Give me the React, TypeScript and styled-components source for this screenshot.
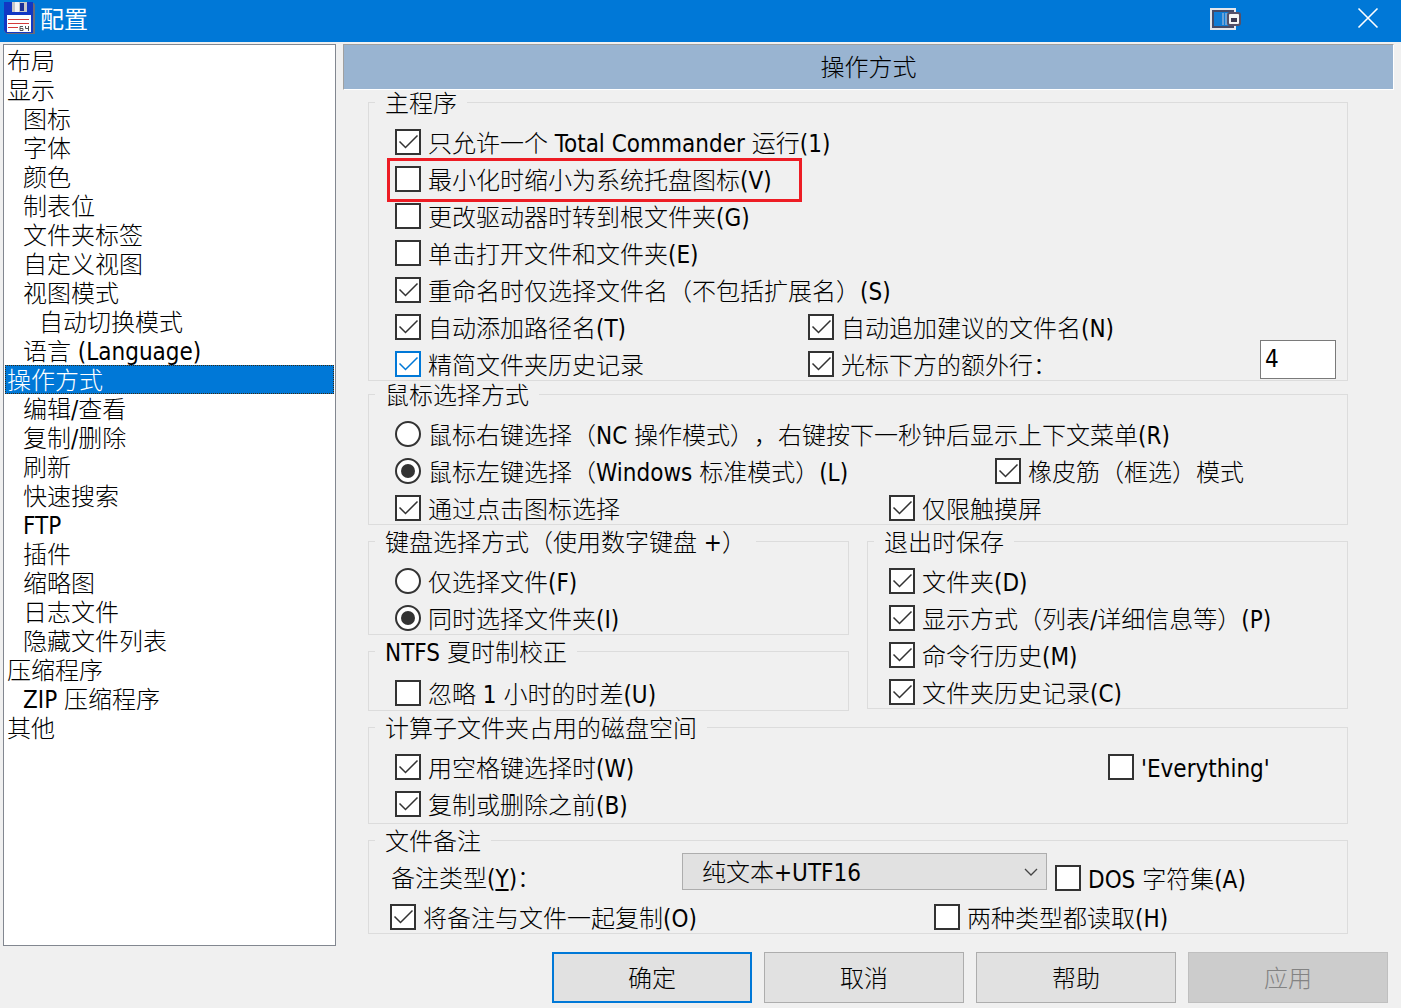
import React, { useState } from "react";
import styled, { createGlobalStyle, css } from "styled-components";

const GlobalStyle = createGlobalStyle`
  *, *::before, *::after { box-sizing: border-box; }
  html, body, #root { height: 100%; }
  body {
    margin: 0;
    background: #f0f0f0;
    color: #000;
    font-family: "DejaVu Sans Condensed", "Noto Sans CJK SC Light", "Noto Sans CJK SC", sans-serif;
    font-size: 24px;
    font-weight: 400;
    line-height: 30px;
    text-spacing-trim: space-all;
  }
  button, input, select { font: inherit; color: inherit; border-radius: 0; }
`;

const Dialog = styled.div`
  display: flex;
  flex-direction: column;
  min-height: 100%;
`;

const TitleBar = styled.header`
  display: flex;
  align-items: center;
  gap: 5px;
  height: 42px;
  padding: 0 20px 6px 3px;
  background: #0078d7;
  color: #fff;
`;

const Title = styled.h1`
  flex: 1;
  margin: 0;
  font-family: "Noto Sans CJK SC", sans-serif;
  font-size: 24px;
  font-weight: 400;
  line-height: 32px;
`;

const TitleButton = styled.button<{ $end?: boolean }>`
  display: flex;
  padding: 0;
  border: 0;
  background: none;
  margin-left: ${(p) => (p.$end ? "108px" : "0")};
`;

const Columns = styled.div`
  display: flex;
  flex: 1;
  gap: 7px;
  padding: 2px 7px 0 3px;
`;

const PageList = styled.nav`
  flex: 0 0 333px;
  align-self: flex-start;
  min-height: 902px;
  padding: 1px;
  border: 1px solid #828790;
  background: #fff;
`;

const PageItem = styled.button<{ $level: number; $active: boolean }>`
  display: block;
  width: 100%;
  height: 29px;
  padding: 4px 0 0 ${(p) => 2 + p.$level * 16}px;
  border: 0;
  background: none;
  line-height: 25px;
  text-align: left;
  white-space: nowrap;
  ${(p) =>
    p.$active &&
    css`
      background: #0078d7;
      color: #fff;
      outline: 1px dotted #3a2a10;
      outline-offset: -1px;
    `}
`;

const Main = styled.main`
  display: flex;
  flex: 1;
  flex-direction: column;
  min-width: 0;
`;

const PageHeading = styled.h2`
  height: 46px;
  margin: 0;
  padding-top: 2px;
  border: 1px solid;
  border-color: #a0a0a0 #fff #fff #a0a0a0;
  background: #99b4d1;
  font-size: 24px;
  font-weight: inherit;
  line-height: 42px;
  text-align: center;
`;

const Groups = styled.form`
  display: flex;
  flex-direction: column;
  gap: 4px;
  padding: 0 46px 0 25px;
`;

const Stack = styled.div<{ $gap: number }>`
  display: flex;
  flex-direction: column;
  gap: ${(p) => p.$gap}px;
`;

const Halves = styled.div`
  display: grid;
  grid-template-columns: 1fr 1fr;
  align-items: start;
  gap: 18px;
`;

const GroupBox = styled.fieldset<{ $top: number; $bottom: number; $left: number }>`
  display: flex;
  flex-direction: column;
  gap: 7px;
  min-width: 0;
  margin: 0;
  padding: ${(p) => `${p.$top}px 11px ${p.$bottom}px ${p.$left}px`};
  border: 1px solid #dcdcdc;
`;

const Legend = styled.legend<{ $shift: number }>`
  margin-left: ${(p) => -p.$shift}px;
  padding: 4px 10px 0;
  line-height: 20px;
  white-space: nowrap;
`;

const Row = styled.div<{ $lead?: number; $height?: number }>`
  display: grid;
  grid-template-columns: ${(p) => (p.$lead ? `${p.$lead}px auto 1fr` : "auto 1fr")};
  align-items: center;
  height: ${(p) => p.$height ?? 30}px;
`;

const OptionLabel = styled.label<{ $marked?: boolean }>`
  display: flex;
  align-items: center;
  gap: 7px;
  white-space: nowrap;
  ${(p) =>
    p.$marked &&
    css`
      position: relative;
      &::after {
        content: "";
        position: absolute;
        left: -8px;
        top: -6px;
        width: 415px;
        height: 44px;
        border: 3px solid #ed1c24;
        pointer-events: none;
      }
    `}
`;

const OptionText = styled.span`
  padding-top: 4px;
  line-height: 26px;
`;

const Mark = styled.span<{ $hot?: boolean }>`
  display: grid;
  flex: none;
  width: 26px;
  height: 26px;
  color: ${(p) => (p.$hot ? "#0078d7" : "#333")};
  & > * { grid-area: 1 / 1; }
  & > svg { visibility: hidden; pointer-events: none; }
  & > input:checked + svg { visibility: visible; }
`;

const MarkInput = styled.input`
  appearance: none;
  width: 26px;
  height: 26px;
  margin: 0;
  border: 2px solid currentColor;
  border-radius: ${(p) => (p.type === "radio" ? "50%" : "0")};
  background: #fff;
`;

const LinesInput = styled.input`
  justify-self: end;
  align-self: end;
  width: 76px;
  height: 39px;
  margin-top: -9px;
  padding: 0 4px 2px;
  border: 1px solid #7a7a7a;
  background: #fff;
`;

const TypeLabel = styled.label`
  padding: 2px 0 0 1px;
  white-space: nowrap;
`;

const SelectBox = styled.span`
  display: grid;
  align-self: start;
  align-items: center;
  width: 365px;
  margin-right: 8px;
  & > * { grid-area: 1 / 1; }
  & > svg { justify-self: end; margin-right: 8px; pointer-events: none; }
`;

const TypeSelect = styled.select`
  appearance: none;
  width: 100%;
  height: 37px;
  padding: 2px 30px 0 19px;
  border: 1px solid #adadad;
  background: #e1e1e1;
`;

const Buttons = styled.footer`
  display: flex;
  justify-content: flex-end;
  gap: 12px;
  margin-top: 18px;
  padding-right: 6px;
`;

const PushButton = styled.button<{ $primary?: boolean }>`
  width: 200px;
  height: 51px;
  padding: 2px 0 0;
  border: ${(p) => (p.$primary ? "2px solid #0078d7" : "1px solid #adadad")};
  background: #e1e1e1;
  &:disabled {
    border-color: #bfbfbf;
    background: #cccccc;
    color: #838383;
  }
`;

const DiskIcon = () => (
  <svg width="32" height="32" viewBox="0 0 32 32" aria-hidden="true">
    <path d="M2 1h29l1 2v29H4l-3-3z" fill="#6b6b78" />
    <path d="M1 0h29v31H3l-2-3z" fill="#1238c4" />
    <path d="M9 0h15v10H9z" fill="#c8c8c8" />
    <path d="M12 0h4v10h-4z" fill="#f4f4f4" />
    <path d="M17 1h4v8h-4z" fill="#1a2f96" />
    <path d="M4 13h24v17H4z" fill="#fff" />
    <path d="M5 17.500h21M5 21.500h21M5 25.500h10" stroke="#d23a3a" />
    <path d="M20 24.500h-3v4h3v-2h-3M22.500 24v2.500h3M25.500 24v5" stroke="#555" fill="none" />
  </svg>
);

const DockIcon = () => (
  <svg width="34" height="28" viewBox="0 0 34 28" aria-hidden="true">
    <path d="M3 5h24v20H3z" fill="#0078d7" stroke="#e4e6ec" strokeWidth="2" />
    <path d="M5 7h20v16H5z" fill="#0f7cd6" stroke="#444a68" strokeWidth="2" />
    <path d="M14 9h2v12h-2zM17 9h3v12h-3z" fill="#6aa2d8" />
    <rect x="20" y="9" width="12" height="12" rx="2" fill="#f4f4f4" stroke="#555068" strokeWidth="2" />
    <path d="M23 14h6v4h-6z" fill="#3a3850" />
  </svg>
);

const CloseIcon = () => (
  <svg width="26" height="26" viewBox="0 0 26 26" aria-hidden="true">
    <path d="M3.500 3.500l19 19M22.500 3.500l-19 19" stroke="#fff" strokeWidth="1.600" />
  </svg>
);

type OptionProps = {
  text: string;
  type?: "checkbox" | "radio";
  name?: string;
  on?: boolean;
  hot?: boolean;
  marked?: boolean;
};

const Option = ({ text, type = "checkbox", name, on, hot, marked }: OptionProps) => (
  <OptionLabel $marked={marked}>
    <Mark $hot={hot}>
      <MarkInput type={type} name={name} defaultChecked={on} />
      <svg width="26" height="26" viewBox="0 0 26 26" aria-hidden="true">
        {type === "radio" ? (
          <circle cx="13" cy="13" r="7" fill="currentColor" />
        ) : (
          <path d="M4.500 12.500l6 6L22.500 6.500" fill="none" stroke="currentColor" strokeWidth="1.500" />
        )}
      </svg>
    </Mark>
    <OptionText>{text}</OptionText>
  </OptionLabel>
);

type GroupProps = {
  title: string;
  top?: number;
  bottom?: number;
  left?: number;
  children: React.ReactNode;
};

const Group = ({ title, top = 13, bottom = 1, left = 26, children }: GroupProps) => (
  <GroupBox $top={top} $bottom={bottom} $left={left}>
    <Legend $shift={left - 6}>{title}</Legend>
    {children}
  </GroupBox>
);

const pages: [string, number][] = [
  ["布局", 0],
  ["显示", 0],
  ["图标", 1],
  ["字体", 1],
  ["颜色", 1],
  ["制表位", 1],
  ["文件夹标签", 1],
  ["自定义视图", 1],
  ["视图模式", 1],
  ["自动切换模式", 2],
  ["语言 (Language)", 1],
  ["操作方式", 0],
  ["编辑/查看", 1],
  ["复制/删除", 1],
  ["刷新", 1],
  ["快速搜索", 1],
  ["FTP", 1],
  ["插件", 1],
  ["缩略图", 1],
  ["日志文件", 1],
  ["隐藏文件列表", 1],
  ["压缩程序", 0],
  ["ZIP 压缩程序", 1],
  ["其他", 0],
];

export default function App() {
  const [page, setPage] = useState("操作方式");
  return (
    <>
      <GlobalStyle />
      <Dialog lang="zh-CN">
        <TitleBar>
          <DiskIcon />
          <Title>配置</Title>
          <TitleButton type="button" aria-label="停靠"><DockIcon /></TitleButton>
          <TitleButton type="button" aria-label="关闭" $end><CloseIcon /></TitleButton>
        </TitleBar>
        <Columns>
          <PageList>
            {pages.map(([name, level]) => (
              <PageItem key={name} type="button" $level={level} $active={name === page} onClick={() => setPage(name)}>
                {name}
              </PageItem>
            ))}
          </PageList>
          <Main>
            <PageHeading>操作方式</PageHeading>
            <Groups>
              <Stack $gap={1}>
                <Group title="主程序">
                  <Row><Option text="只允许一个 Total Commander 运行(1)" on /></Row>
                  <Row><Option text="最小化时缩小为系统托盘图标(V)" marked /></Row>
                  <Row><Option text="更改驱动器时转到根文件夹(G)" /></Row>
                  <Row><Option text="单击打开文件和文件夹(E)" /></Row>
                  <Row><Option text="重命名时仅选择文件名（不包括扩展名）(S)" on /></Row>
                  <Row $lead={413}>
                    <Option text="自动添加路径名(T)" on />
                    <Option text="自动追加建议的文件名(N)" on />
                  </Row>
                  <Row $lead={413}>
                    <Option text="精简文件夹历史记录" on hot />
                    <Option text="光标下方的额外行：" on />
                    <LinesInput type="text" defaultValue="4" aria-label="光标下方的额外行" />
                  </Row>
                </Group>
                <Group title="鼠标选择方式">
                  <Row><Option type="radio" name="mouse" text="鼠标右键选择（NC 操作模式），右键按下一秒钟后显示上下文菜单(R)" /></Row>
                  <Row $lead={600}>
                    <Option type="radio" name="mouse" text="鼠标左键选择（Windows 标准模式）(L)" on />
                    <Option text="橡皮筋（框选）模式" on />
                  </Row>
                  <Row $lead={494}>
                    <Option text="通过点击图标选择" on />
                    <Option text="仅限触摸屏" on />
                  </Row>
                </Group>
              </Stack>
              <Halves>
                <Stack $gap={4}>
                  <Group title="键盘选择方式（使用数字键盘 +）">
                    <Row><Option type="radio" name="keyboard" text="仅选择文件(F)" /></Row>
                    <Row><Option type="radio" name="keyboard" text="同时选择文件夹(I)" on /></Row>
                  </Group>
                  <Group title="NTFS 夏时制校正" top={15} bottom={2}>
                    <Row><Option text="忽略 1 小时的时差(U)" /></Row>
                  </Group>
                </Stack>
                <Group title="退出时保存" left={21}>
                  <Row><Option text="文件夹(D)" on /></Row>
                  <Row><Option text="显示方式（列表/详细信息等）(P)" on /></Row>
                  <Row><Option text="命令行历史(M)" on /></Row>
                  <Row><Option text="文件夹历史记录(C)" on /></Row>
                </Group>
              </Halves>
              <Group title="计算子文件夹占用的磁盘空间" bottom={4}>
                <Row $lead={713}>
                  <Option text="用空格键选择时(W)" on />
                  <Option text="'Everything'" />
                </Row>
                <Row><Option text="复制或删除之前(B)" on /></Row>
              </Group>
              <Group title="文件备注" top={1} left={21}>
                <Stack $gap={0}>
                  <Row $lead={292} $height={49}>
                    <TypeLabel htmlFor="comment-type">备注类型(<u>Y</u>)：</TypeLabel>
                    <SelectBox>
                      <TypeSelect id="comment-type">
                        <option>纯文本+UTF16</option>
                      </TypeSelect>
                      <svg width="16" height="10" viewBox="0 0 16 10" aria-hidden="true">
                        <path d="M2 2l6 6 6-6" fill="none" stroke="#444" strokeWidth="1.300" />
                      </svg>
                    </SelectBox>
                    <Option text="DOS 字符集(A)" />
                  </Row>
                  <Row $lead={544}>
                    <Option text="将备注与文件一起复制(O)" on />
                    <Option text="两种类型都读取(H)" />
                  </Row>
                </Stack>
              </Group>
            </Groups>
            <Buttons>
              <PushButton type="button" $primary>确定</PushButton>
              <PushButton type="button">取消</PushButton>
              <PushButton type="button">帮助</PushButton>
              <PushButton type="button" disabled>应用</PushButton>
            </Buttons>
          </Main>
        </Columns>
      </Dialog>
    </>
  );
}
